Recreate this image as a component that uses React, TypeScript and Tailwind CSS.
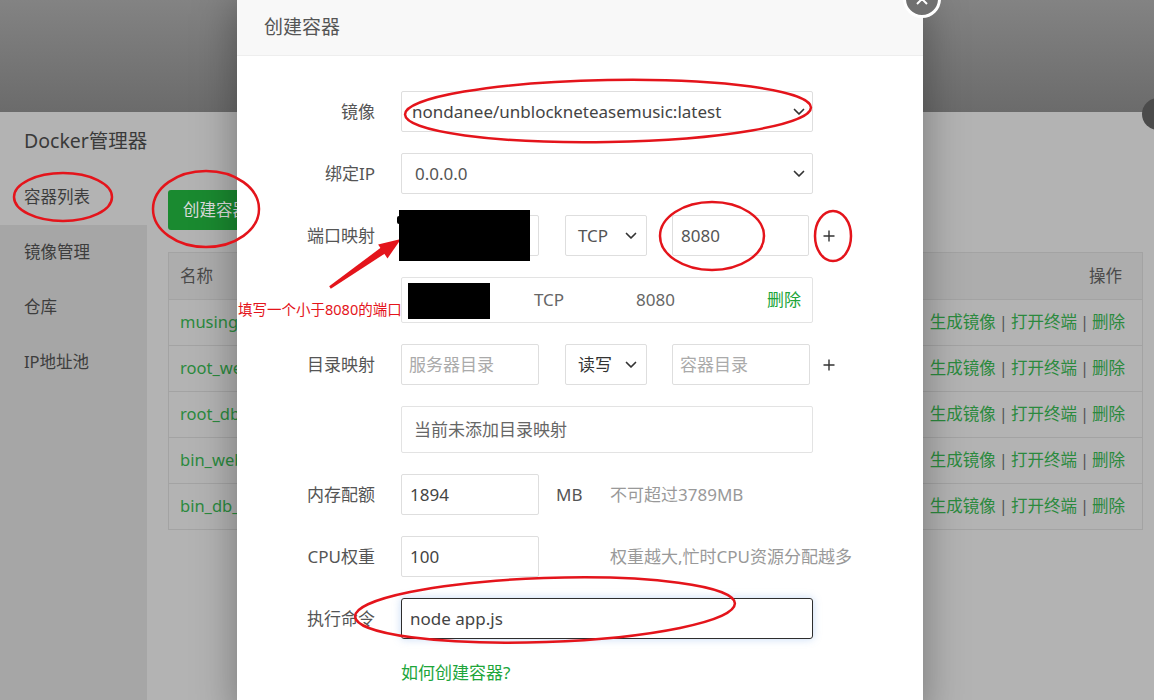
import React from 'react';

const containers = ['musing', 'root_web', 'root_db', 'bin_web', 'bin_db_1'];
const sideItems = ['容器列表', '镜像管理', '仓库', 'IP地址池'];

function Chevron() {
  return (
    <svg width="12" height="8" viewBox="0 0 12 8" fill="none">
      <path d="M1.5 1.5l4.5 4.5l4.5-4.5" stroke="#333" strokeWidth="1.7" strokeLinecap="round" strokeLinejoin="round" />
    </svg>
  );
}

function Plus() {
  return (
    <svg width="12" height="12" viewBox="0 0 12 12" fill="none">
      <path d="M6 0.5v11M0.5 6h11" stroke="#333" strokeWidth="1.4" />
    </svg>
  );
}

function Row({ label, children }: { label: string; children: React.ReactNode }) {
  return (
    <div className="flex items-center">
      <div className="w-[164px] pr-[26px] text-right text-[17px] text-[#555]">{label}</div>
      {children}
    </div>
  );
}

const boxBase = 'h-[41px] border border-[#dedede] rounded-[2px] flex items-center text-[17px]';

export default function App() {
  return (
    <div className="relative w-[1154px] h-[700px] overflow-hidden flex flex-col font-['Noto_Sans','Noto_Sans_CJK_SC',sans-serif]">
      {/* dimmed page behind */}
      <div className="h-[112px] bg-gradient-to-b from-[#838383] via-[#777777] to-[#6b6b6b]" />
      <div className="flex-1 flex flex-col bg-[#b3b3b3]">
        <div className="h-[58px] flex items-center pl-[24px] text-[19.5px] text-[#3a3a3a]">Docker管理器</div>
        <div className="flex flex-1">
          <div className="w-[147px] bg-[#a6a6a6] flex flex-col">
            {sideItems.map((s, i) => (
              <div
                key={s}
                className={`h-[55px] flex items-center pl-[24px] text-[16.5px] text-[#3d3d3d] ${i === 0 ? 'bg-[#b3b3b3]' : ''}`}
              >
                {s}
              </div>
            ))}
          </div>
          <div className="flex-1 pl-[21px] pr-[11px] pt-[20px]">
            <div className="inline-flex h-[40px] items-center px-[15px] rounded-[3px] bg-[#1a8a30] text-[16.5px] text-[#dcdcdc]">
              创建容器
            </div>
            <div className="mt-[22px] border border-[#a3a3a3]">
              <div className="h-[46px] bg-[#adadad] flex items-center justify-between px-[11px] text-[16.5px] text-[#4a4a4a]">
                <span>名称</span>
                <span className="pr-[9px]">操作</span>
              </div>
              {containers.map((c) => (
                <div key={c} className="h-[46px] border-t border-[#a3a3a3] flex items-center justify-between px-[11px] text-[16.5px]">
                  <span className="text-[#2b8a3e]">{c}</span>
                  <span className="text-[#2b8a3e] pr-[6px]">
                    生成镜像<span className="text-[#555] mx-[3px]">|</span>打开终端<span className="text-[#555] mx-[3px]">|</span>删除
                  </span>
                </div>
              ))}
            </div>
          </div>
        </div>
      </div>

      {/* close button of docker panel */}
      <div className="absolute left-[1142px] top-[98px] w-[32px] h-[32px] rounded-full bg-[#4b4b4b]" />

      {/* create container dialog */}
      <div className="absolute left-[237px] top-0 w-[686px] h-[720px] bg-white shadow-[0_0_40px_rgba(0,0,0,0.35)]">
        <div className="h-[56px] bg-[#f8f8f8] border-b border-[#eeeeee] flex items-center pl-[27px] text-[19px] text-[#555]">
          创建容器
        </div>
        <div className="pt-[35px] flex flex-col gap-[21px]">
          <Row label="镜像">
            <div className={`${boxBase} w-[412px] justify-between pl-[10px] pr-[7px] text-[#444]`}>
              <span>nondanee/unblockneteasemusic:latest</span>
              <Chevron />
            </div>
          </Row>
          <Row label="绑定IP">
            <div className={`${boxBase} w-[412px] justify-between pl-[13px] pr-[7px] text-[#555]`}>
              <span>0.0.0.0</span>
              <Chevron />
            </div>
          </Row>
          <Row label="端口映射">
            <div className={`${boxBase} w-[138px] pl-[9px] text-[#555]`} />
            <div className={`${boxBase} w-[82px] ml-[26px] justify-between pl-[12px] pr-[9px] text-[#555]`}>
              <span>TCP</span>
              <Chevron />
            </div>
            <div className={`${boxBase} w-[137px] ml-[25px] pl-[8px] text-[#555]`}>8080</div>
            <div className="ml-[14px]">
              <Plus />
            </div>
          </Row>
          <Row label="">
            <div className="w-[412px] h-[46px] border border-[#e3e3e3] rounded-[2px] flex items-center pl-[12px] pr-[11px] text-[17px] text-[#666]">
              <span className="w-[120px]" />
              <span className="w-[102px]">TCP</span>
              <span className="flex-1">8080</span>
              <span className="text-[#20a53a]">删除</span>
            </div>
          </Row>
          <Row label="目录映射">
            <div className={`${boxBase} w-[138px] pl-[7px] text-[#aaa]`}>服务器目录</div>
            <div className={`${boxBase} w-[82px] ml-[26px] justify-between pl-[12px] pr-[9px] text-[#333]`}>
              <span>读写</span>
              <Chevron />
            </div>
            <div className={`${boxBase} w-[138px] ml-[25px] pl-[7px] text-[#aaa]`}>容器目录</div>
            <div className="ml-[13px]">
              <Plus />
            </div>
          </Row>
          <Row label="">
            <div className="w-[412px] h-[47px] border border-[#e3e3e3] rounded-[2px] flex items-center pl-[12px] text-[17px] text-[#666]">
              当前未添加目录映射
            </div>
          </Row>
          <Row label="内存配额">
            <div className={`${boxBase} w-[138px] pl-[8px] text-[#444]`}>1894</div>
            <span className="w-[71px] pl-[17px] text-[17px] text-[#555]">MB</span>
            <span className="text-[17px] text-[#999]">不可超过3789MB</span>
          </Row>
          <Row label="CPU权重">
            <div className={`${boxBase} w-[138px] pl-[8px] text-[#444]`}>100</div>
            <span className="w-[71px]" />
            <span className="text-[17px] text-[#999]">权重越大,忙时CPU资源分配越多</span>
          </Row>
          <Row label="执行命令">
            <div className="w-[412px] h-[41px] border-[1.5px] border-[#2d2d2d] rounded-[3px] flex items-center pl-[8px] text-[17px] text-[#444] shadow-[0_0_8px_rgba(90,150,230,0.35)]">
              node app.js
            </div>
          </Row>
          <div className="pl-[164px] text-[17px] text-[#20a53a]">如何创建容器?</div>
        </div>

        {/* dialog close */}
        <div className="absolute left-[666px] top-[-20px] w-[38px] h-[38px] rounded-full bg-[#707070] border-[3px] border-white">
          <svg className="absolute left-[10px] top-[10px]" width="12" height="12" viewBox="0 0 12 12" fill="none">
            <path d="M1 1L11 11M11 1L1 11" stroke="white" strokeWidth="2" />
          </svg>
        </div>
      </div>

      {/* hand-drawn annotations */}
      <svg className="absolute inset-0 pointer-events-none" width="1154" height="700" viewBox="0 0 1154 700">
        <g fill="none" stroke="#e4141b" strokeWidth="2.5">
          <ellipse cx="63" cy="197" rx="49" ry="24" />
          <ellipse cx="206" cy="209" rx="53" ry="38" />
          <ellipse cx="608" cy="111" rx="203" ry="31" transform="rotate(-1 608 111)" />
          <ellipse cx="712" cy="236" rx="52" ry="34" />
          <ellipse cx="833" cy="236" rx="18" ry="25" />
          <ellipse cx="545" cy="610" rx="190" ry="32" transform="rotate(-2 545 610)" />
        </g>
        <polygon points="329.2,286.3 330.8,288.7 385.1,253.4 381,247.5" fill="#e4141b" />
        <polygon points="401,239 387.5,258.4 378.1,244.4" fill="#e4141b" />
        <rect x="399" y="210" width="131" height="51" fill="#000" />
        <rect x="397" y="216" width="4" height="8" rx="2" fill="#000" />
        <rect x="408" y="283" width="82" height="36" fill="#000" />
      </svg>
      <div className="absolute left-[238px] top-[297px] text-[14.5px] leading-[24px] text-[#e4141b] whitespace-nowrap">
        填写一个小于8080的端口
      </div>
    </div>
  );
}
